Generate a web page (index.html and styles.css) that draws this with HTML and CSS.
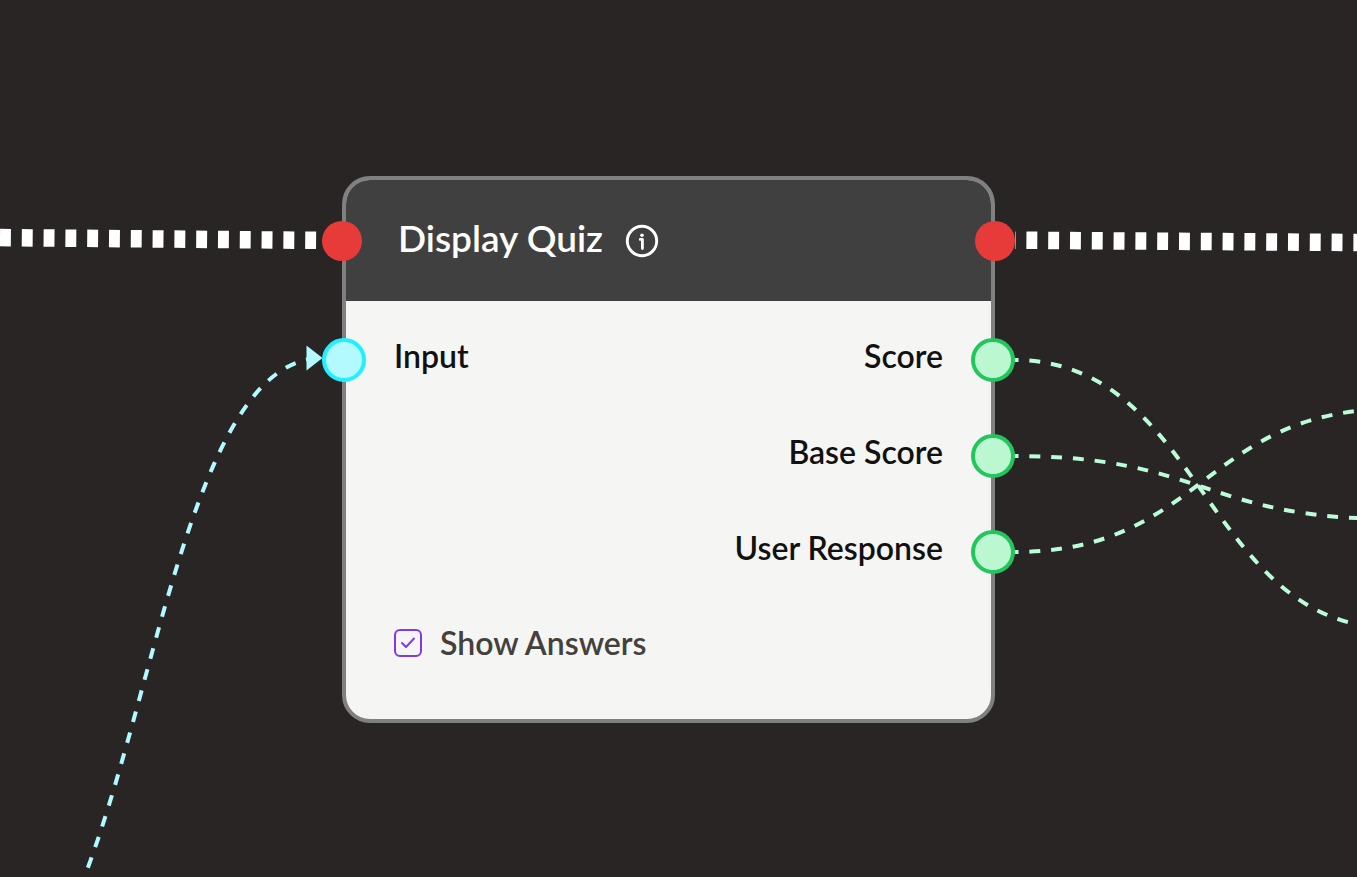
FILE: index.html
```html
<!DOCTYPE html>
<html lang="en">
<head>
    <meta charset="UTF-8">
    <meta name="viewport" content="width=device-width, initial-scale=1.0">
    <title>Display Quiz</title>
    <link rel="stylesheet" href="styles.css">
</head>
<body>
    <main class="canvas">
        <svg class="edges" aria-hidden="true">
            <!-- flow -->
            <path class="edge flow" d="M0 237.6 L322 240.4" />
            <path class="edge flow flow-out" d="M1015 240.2 L1380 242.7" />
            <!-- data in, drawn from the arrow back to its source -->
            <path class="edge data-in" d="M322 358 C143 358 143 1013 -36 1013" />
            <path class="arrow" d="M306.5 345.5 L322.5 358 L306.5 370.5 Z" />
            <!-- data out -->
            <path class="edge data-out" d="M1014 360 C1204 360 1204 628 1394 628" />
            <path class="edge data-out" d="M1014 456 C1204 456 1204 519 1394 519" />
            <path class="edge data-out" d="M1014 552 C1204 552 1204 409 1394 409" />
        </svg>

        <section class="node">
            <header class="node-header">
                <span class="port flow-port left"></span>
                <h1>Display Quiz</h1>
                <button class="info" type="button" aria-label="About this node">
                    <svg viewBox="0 0 34 34" width="34" height="34" fill="none" stroke="#fff">
                        <circle cx="17" cy="17" r="14.7" stroke-width="2.9" />
                        <circle cx="17" cy="11.2" r="1.8" fill="#fff" stroke="none" />
                        <path d="M15.2 15.4 H17.4 V24.6" stroke-width="2.8" stroke-linecap="round" stroke-linejoin="round" />
                    </svg>
                </button>
                <span class="port flow-port right"></span>
            </header>
            <div class="node-body">
                <div class="row">
                    <span class="port in-port left"></span>
                    <span>Input</span>
                    <span>Score</span>
                    <span class="port out-port right"></span>
                </div>
                <div class="row">
                    <span class="output">Base Score</span>
                    <span class="port out-port right"></span>
                </div>
                <div class="row">
                    <span class="output">User Response</span>
                    <span class="port out-port right"></span>
                </div>
                <label class="option">
                    <span class="check">
                        <input type="checkbox" checked>
                        <svg viewBox="0 0 28 28" width="28" height="28" fill="none" stroke="#7c3aed">
                            <path d="M8 14 L12 18 L20 9.5" stroke-width="1.9" stroke-linecap="round" stroke-linejoin="round" />
                        </svg>
                    </span>
                    <span>Show Answers</span>
                </label>
            </div>
        </section>
    </main>
</body>
</html>
```
FILE: styles.css
```css
* { box-sizing: border-box; }
body { margin: 0; background: #292524; font-family: Lato, "Open Sans", sans-serif; font-weight: 600; }
.canvas { position: relative; min-height: 100vh; overflow: hidden; }

.edges { position: absolute; inset: 0; width: 100%; height: 100%; }
.edge { fill: none; stroke-width: 4; stroke-dasharray: 10.9 10.9; }
.flow { stroke: #fff; stroke-width: 17.5; }
.flow-out { stroke-dashoffset: 10.4; }
.data-in { stroke: #b2faff; stroke-dashoffset: 16.6; }
.data-out { stroke: #bbfdd9; stroke-dashoffset: 6.5; }
.arrow { fill: #b2faff; }

.node { position: absolute; left: 342px; top: 176px; width: 653px; border: 4px solid #808080; border-radius: 28px; background: #f5f5f4; }
.node-header { position: relative; display: flex; align-items: center; gap: 22px; height: 121px; padding: 0 52px; background: #404040; border-radius: 24px 24px 0 0; color: #fff; }
.node-header h1 { margin: 0; padding-bottom: 6px; font-size: 37px; line-height: 44px; font-weight: 600; }
.info { display: flex; padding: 0; border: 0; background: none; cursor: pointer; }

.node-body { padding: 11px 0 34px; font-size: 32px; line-height: 40px; color: #111; }
.row { position: relative; display: flex; align-items: center; justify-content: space-between; height: 96px; padding: 0 48px 8px; }
.output { margin-left: auto; }
.option { display: flex; align-items: center; gap: 18px; height: 85px; padding: 0 48px; color: #44403c; cursor: pointer; }
.check { display: grid; }
.check input, .check svg { grid-area: 1 / 1; }
.check input { appearance: none; width: 28px; height: 28px; margin: 0; border: 2px solid #7c3aed; border-radius: 6px; cursor: pointer; }
.check svg { visibility: hidden; pointer-events: none; }
.check input:checked + svg { visibility: visible; }

.port { position: absolute; top: 50%; width: 44px; height: 44px; border: 4px solid; border-radius: 50%; transform: translateY(-50%); }
.port.left { left: -24px; }
.port.right { right: -24px; }
.port.flow-port { width: 40px; height: 40px; border: 0; background: #e63b39; }
.in-port { background: #b2faff; border-color: #22f0ff; }
.out-port { background: #bbf7d0; border-color: #22c55e; }
```
